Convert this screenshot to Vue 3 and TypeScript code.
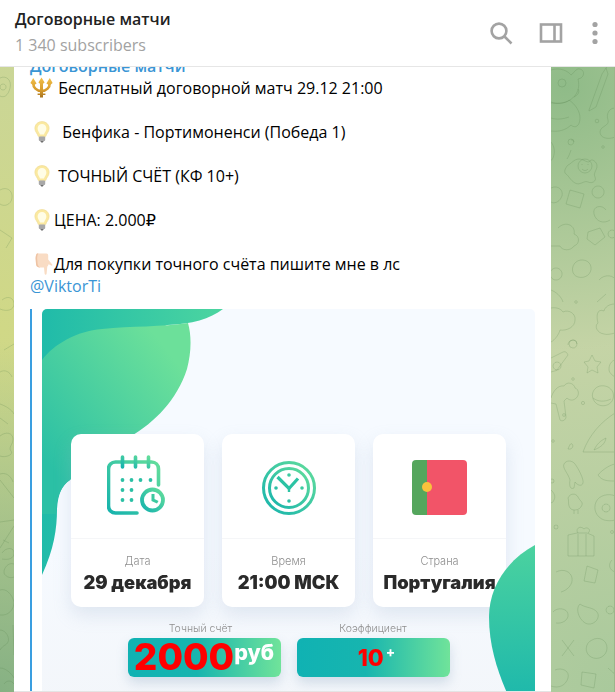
<script setup lang="ts">
const lines = [
  { icon: "trident", text: " Бесплатный договорной матч 29.12 21:00" },
  { icon: "bulb", text: "  Бенфика - Портимоненси (Победа 1)" },
  { icon: "bulb", text: " ТОЧНЫЙ СЧЁТ (КФ 10+)" },
  { icon: "bulb", text: "ЦЕНА: 2.000₽" },
  { icon: "hand", text: "Для покупки точного счёта пишите мне в лс" },
];
const cards = [
  { id: "date", label: "Дата", value: "29 декабря" },
  { id: "time", label: "Время", value: "21:00 МСК" },
  { id: "country", label: "Страна", value: "Португалия" },
];
const dots = [
  [18.5, 26], [27.5, 26], [36.5, 26], [46.5, 26],
  [18.5, 36], [27.5, 36],
  [18.5, 46], [27.5, 46],
];
</script>

<template>
  <div class="window">
    <header class="top">
      <div class="title">
        <div class="name">Договорные матчи</div>
        <div class="subs">1 340 subscribers</div>
      </div>
      <div class="actions">
        <svg width="24" height="24" viewBox="0 0 24 24" fill="none" stroke="#a3a3a3" stroke-width="2.6">
          <circle cx="10" cy="10" r="7.4" />
          <path d="M15.5 15.5 22.5 22.5" />
        </svg>
        <svg width="24" height="24" viewBox="0 0 24 24" fill="none" stroke="#a3a3a3" stroke-width="2.6">
          <rect x="2" y="3.5" width="20" height="17" />
          <path d="M15.5 3.5v17" />
        </svg>
        <svg class="more" width="6" height="24" viewBox="0 0 6 24" fill="#a3a3a3">
          <circle cx="3" cy="3.5" r="2.6" />
          <circle cx="3" cy="12" r="2.6" />
          <circle cx="3" cy="20.5" r="2.6" />
        </svg>
      </div>
    </header>

    <main class="chat">
      <svg class="doodles" width="615" height="625" viewBox="0 67 615 625" fill="none" stroke="#54804a" stroke-opacity=".21" stroke-width="1">
        <!-- left strip -->
        <path d="M0 78c6-3 12 2 10 10s-6 10-10 8M3 84a3 3 0 1 0 .1 0" />
        <path d="M0 190c7-4 13 1 12 8s-8 9-12 6M0 230l12 8M12 238l-6 10" />
        <path d="M2 300c6-5 12-2 12 4s-7 8-14 5M4 350l10-6M0 372c5-3 10 0 12 5" />
        <path d="M0 404c6 2 12 6 14 10M0 418l8 6" />
        <path d="M0 436c6-5 13-3 13 3s-5 8-2 12-6 7-11 5M0 474c6-2 11 2 13 8M0 480l14 18" />
        <path d="M0 522l14-2M0 548l14-22M3 540l6 3M2 553c4-6 12-6 12 0s-6 7-12 6" />
        <path d="M14 564c-6-2-10 4-10 8s6 7 10 5M0 590c6-2 12 4 14 12 0 8-6 14-14 13" />
        <path d="M0 630c6 0 10 8 8 12s-4 2-8 8M13 625l1 30M0 668c6 0 12 6 14 10M4 684c3-4 7-4 10 0" />
        <!-- right strip: bear, brush, egg -->
        <path d="M551 70c9-3 17 1 20 5 3-2 5-7 9-6s5 6 1 9l-3 1c2 8 0 16-8 21-6 4-14 4-19 2" />
        <circle cx="562" cy="83" r="4" />
        <path d="M578 89c2 3 0 6-4 8M551 103c8 1 15 0 18-3 6 4 11 11 11 18 0 8-5 11-9 7-5 5-12 7-20 6M551 118c6 2 12 1 18-1" />
        <path d="M589 110l13-36 4-6 2 6-12 33-7 4zM606 68c2-3 5-5 8-5" />
        <path d="M615 108c-6 0-9 6-7 12s-8 6-8 12 8 8 15 5" />
        <circle cx="597" cy="121" r="1.8" />
        <path d="M574 142a3 3 0 1 0-3 3c4-1 3-6 0-5" />
        <circle cx="603" cy="147" r="1.3" />
        <path d="M571 150c-1 3-2 6-4 9M551 142c4 5 4 11 2 16-2 3-1 2-2 2" />
        <path d="M568 165c3-1 6-6 11-6s9 5 11 2 7 1 7 5-4 7-2 11-3 7-7 5-8 4-13 1-6-7-9-9 0-7 2-9z" />
        <circle cx="585" cy="166" r="7" />
        <path d="M582 164v1M588 164v1M582 169c2 2 4 2 6 0" />
        <!-- right strip: middle -->
        <path d="M551 188c8-4 14 4 10 10-2 4-7 6-10 4M570 190l14 4-4 14-14-4zM598 186a6 6 0 1 0 .1 0M606 210c-4-6-14-4-12 4s10 10 16 6" />
        <path d="M558 228c8-8 18-2 16 6 6 2 6 10 0 12-3 5-12 5-14 0l-9 0M588 232l12-4 5 9-10 8-8-6zM612 230a4 4 0 1 0 .1 0" />
        <path d="M556 268a6 6 0 1 0 .1 0M576 262c5-4 14-2 15 5s-6 12-13 10-7-11-2-15zM599 280c6-7 16-4 16 0" />
        <path d="M606 294l-9 8M551 290c5 2 10 6 12 12" />
        <!-- right strip: cloud, fox, spiral -->
        <path d="M551 308c6-1 10 1 12 4 6-3 13 2 12 8 0 7-8 11-15 10-1 4-5 10-9 12" />
        <path d="M615 304c-6 0-10 3-11 7-7-3-8 5-6 12-4 3-1 10 6 11 3 1 7 0 11-1" />
        <path d="M577 344a4 4 0 1 0-4 4c5 0 5-7 1-8-4 0-6 2-6 5" />
        <circle cx="576" cy="302" r="1.3" />
        <path d="M551 358l12-6c3-1 4 1 5 3l-11 15c-1 1-3 1-6 2M557 362a4 4 0 1 0 .1 0" />
        <path d="M589 361l3-6 3 6 6 1-4 5 1 6-6-3-5 3 1-6-4-5z" />
        <path d="M615 360c-4 1-6 5-6 9s3 6 6 8" />
        <circle cx="573" cy="379" r="1.3" />
        <path d="M551 398c2-7 7-13 13-12 3-5 10-3 11 2 4 1 5 8 0 11-3 2-6 1-8-1l-3 3 2 16c0 3-4 5-6 3l-4-16-5-1" />
        <circle cx="564" cy="415" r="1.4" />
        <path d="M605 386c6 1 10 7 8 13s-9 8-14 6-8-8-6-13 7-7 12-6zM593 398c5 4 12 4 18 1" />
        <circle cx="583" cy="403" r="1.6" />
        <path d="M583 452c6-17 18-30 32-39M583 452h32M594 450c3-6 6-9 12-12-1 6-5 9-12 12" />
        <circle cx="553" cy="441" r="1.3" />
        <path d="M568 449c2-5 3-6 4-5 2 2 0 6-4 5zM564 464c2-4 8-4 11 0s9 15 8 19-6 2-8-1l-1 6c-4 2-5-3-4-8-2-7-8-12-6-16z" />
        <path d="M615 464c-6 1-14 7-17 11 4 6 10 6 17 6" />
        <circle cx="552" cy="481" r="2" />
        <path d="M568 498c2-5 8-5 10-1s5 5 4 8-4 5-7 5-5-1-6-4 0-6-1-8zM574 510v4M578 510v4" />
        <path d="M551 490c3 3 5 6 3 10s-2 2-3 3M615 496c-6-3-16-1-19 6s0 15 8 18c4 1 8 1 11 0M606 504a4 4 0 1 0 .1 0" />
        <circle cx="556" cy="527" r="2" />
        <path d="M568 535l9-2h10l7 3v20h-26zM578 533c-3-4 2-8 6-4 3-3 8 1 4 4M578 534v22M586 534v22" />
        <circle cx="612" cy="532" r="1.5" />
        <!-- right strip: bottom -->
        <path d="M556 572c8-4 15 0 16 6s-4 12-11 14M587 566l11 4-3 13-11-2zM612 560c-4 4-3 10 3 12" />
        <path d="M553 612c4-5 14-4 15 2s-6 10-12 9M580 604c5 4 13 3 17 8s-2 13-9 12-14-14-8-20zM610 606a4 4 0 1 0 .1 0" />
        <path d="M562 640l12 16M574 640l-12 16M592 640c7-4 15 0 15 8s-9 13-16 9-6-14 1-17z" />
        <path d="M555 670c7-3 15 1 13 8s-9 11-17 8M582 672l14 2-2 14-13-3zM608 668c3 3 7 5 7 8" />
      </svg>

      <article class="bubble">
        <div class="channel">Договорные матчи</div>
        <p v-for="line in lines" :key="line.text" class="line">
          <svg v-if="line.icon === 'trident'" class="emoji" width="24" height="22" viewBox="0 0 24 22" fill="none">
            <defs>
              <linearGradient id="gold" gradientUnits="userSpaceOnUse" x1="0" y1="0" x2="0" y2="22">
                <stop offset="0" stop-color="#f3c24a" />
                <stop offset=".6" stop-color="#d69a2c" />
                <stop offset="1" stop-color="#9c6a1c" />
              </linearGradient>
            </defs>
            <path stroke="url(#gold)" stroke-width="2.6" d="M3.4 6C3 10.5 6.5 14 11.5 14 16.5 14 20 10.5 19.6 6" />
            <path stroke="url(#gold)" stroke-width="3" d="M11.5 4V20.5" />
            <path fill="url(#gold)" d="M11.5 .5 14.6 5.5 11.5 8 8.4 5.5ZM3.2 1 6.6 6.4 3.4 8.6 .4 6ZM19.8 1 22.6 6 19.6 8.6 16.4 6.4ZM7.6 16.4H15.4V18H7.6Z" />
          </svg>
          <svg v-else-if="line.icon === 'bulb'" class="emoji" width="24" height="22" viewBox="0 0 24 22">
            <path fill="#fbe9a0" stroke="#efdc96" stroke-width=".7" d="M12 .6C7.6 .6 4.9 3.8 4.9 7.4 4.9 10.6 7.4 12.4 8.4 15.6H15.6C16.6 12.4 19.1 10.6 19.1 7.4 19.1 3.8 16.4 .6 12 .6Z" />
            <path fill="#fffde6" d="M12 3C9.4 3 7.6 5 7.6 7.4 7.6 9.6 9.2 11 10 13.4H14C14.8 11 16.4 9.6 16.4 7.4 16.4 5 14.6 3 12 3Z" />
            <rect x="8.8" y="15.6" width="6.4" height="4.4" rx="1" fill="#a8a8a8" />
            <path fill="#6f6f6f" d="M10.2 20H13.8L12.8 21.6H11.2Z" />
          </svg>
          <svg v-else class="emoji" width="24" height="22" viewBox="0 0 24 22">
            <path fill="#f9dcc4" d="M7 .6H16.4C17.6 .6 18.2 1.4 18.2 2.6V6.6L22.2 11.4C22.8 12.2 22 13 21.2 12.6L18.6 11.2C18.2 12.4 17.8 13 17.3 13.6L16.6 20.8C16.4 22.2 14.8 22.2 14.6 20.8L14 14.4H9.4C7 14.4 6 12.6 6 10.8L5.7 6.4C5.4 4.2 5.8 2 7 .6Z" />
            <path fill="#eec3a4" d="M7 .6C5.8 2 5.4 4.2 5.7 6.4L6 10.8C6 12.6 7 14.4 9.4 14.4H10C8 13.4 7.6 11.6 7.5 9.6L7.2 6C7 4 7.4 2 8.4 .6Z" />
          </svg>
          <span>{{ line.text }}</span>
        </p>
        <p class="mention-line"><a class="mention" href="#">@ViktorTi</a></p>

        <div class="attach">
          <div class="poster">
            <svg class="blobs" width="493" height="383" viewBox="0 0 493 383">
              <defs>
                <linearGradient id="dark" x1="0" y1="0" x2="1" y2="0">
                  <stop offset="0" stop-color="#20bba9" />
                  <stop offset="1" stop-color="#4cd5a0" />
                </linearGradient>
                <linearGradient id="light" x1="0" y1="1" x2="1" y2="0">
                  <stop offset=".15" stop-color="#2bc0a5" />
                  <stop offset=".85" stop-color="#6ce09a" />
                </linearGradient>
                <linearGradient id="corner" x1="0" y1="0" x2="0" y2="1">
                  <stop offset="0" stop-color="#4bd29f" />
                  <stop offset="1" stop-color="#1fb9ab" />
                </linearGradient>
              </defs>
              <path fill="url(#dark)" d="M0 0H181C168 10 150 15 125 16L40 60 28 171C20 176 16 185 15 200 15 220 12 240 0 266Z" />
              <path fill="url(#light)" d="M0 51C12 35 35 22 60 20 90 17 120 18 146 14 150 28 149 45 145 60 135 91 113 113 88 128 70 139 50 155 28 171 18 178 14 190 14 205L0 205Z" />
            </svg>
            <div class="cards">
              <section v-for="card in cards" :key="card.id" class="card">
                <div class="card-icon">
                  <svg v-if="card.id === 'date'" width="62" height="66" viewBox="3 0 62 66" fill="none">
                    <defs>
                      <linearGradient id="ico" x1="0" y1="1" x2="1" y2="0">
                        <stop offset="0" stop-color="#16b3ad" />
                        <stop offset="1" stop-color="#62dd9b" />
                      </linearGradient>
                    </defs>
                    <path stroke="url(#ico)" stroke-width="3.6" stroke-linecap="round" d="M33 59H11.5C7.5 59 4.5 56 4.5 52V15C4.5 11 7.5 8 11.5 8H47.5C51.5 8 54.5 11 54.5 15V31" />
                    <path stroke="url(#ico)" stroke-width="3.6" stroke-linecap="round" d="M18.5 3V13M31.5 3V13M44.5 3V13" />
                    <circle v-for="d in dots" :key="d[0] * 100 + d[1]" :cx="d[0]" :cy="d[1]" r="1.9" fill="#2cc0a5" />
                    <circle cx="48.5" cy="46" r="10.5" fill="#fff" stroke="url(#ico)" stroke-width="3.8" />
                    <path fill="#3cc9a0" d="M47.5 40H50.5V45L54.5 47 53 49.5 47.5 47Z" />
                  </svg>
                  <svg v-else-if="card.id === 'time'" width="56" height="56" viewBox="0 -1 56 56" fill="none">
                    <defs>
                      <linearGradient id="ico2" x1="0" y1="1" x2="1" y2="0">
                        <stop offset="0" stop-color="#16b3ad" />
                        <stop offset="1" stop-color="#62dd9b" />
                      </linearGradient>
                    </defs>
                    <circle cx="28" cy="28" r="25.5" stroke="url(#ico2)" stroke-width="3" />
                    <circle cx="28" cy="28" r="19.5" stroke="url(#ico2)" stroke-width="3" />
                    <path stroke="#2cc3a4" stroke-width="3.2" fill="none" d="M16.5 17 28 28.5 37 18.5" />
                    <path stroke="#2cc3a4" stroke-width="2.4" d="M28 26V32" />
                    <circle cx="28" cy="15" r="1.8" fill="#3ccaa1" />
                    <circle cx="41" cy="28" r="1.8" fill="#3ccaa1" />
                    <circle cx="28" cy="41" r="1.8" fill="#2cc0a5" />
                    <circle cx="15" cy="28" r="1.8" fill="#2cc0a5" />
                  </svg>
                  <div v-else class="flag"><span class="flag-dot" /></div>
                </div>
                <div class="card-body">
                  <div class="card-label">{{ card.label }}</div>
                  <div class="card-value">{{ card.value }}</div>
                </div>
              </section>
            </div>
            <div class="offers">
              <div class="offer">
                <div class="offer-label first">Точный счёт</div>
                <div class="offer-box">
                  <span class="price">2000</span><span class="rub">руб</span>
                </div>
              </div>
              <div class="offer">
                <div class="offer-label">Коэффициент</div>
                <div class="offer-box">
                  <span class="ratio">10</span><span class="plus">+</span>
                </div>
              </div>
            </div>
            <svg class="blob-right" width="46" height="148" viewBox="0 0 46 148">
              <path fill="url(#corner)" d="M46 0C20 14 0 40 0 72 0 100 8 125 18 148H46Z" />
            </svg>
          </div>
        </div>
      </article>
    </main>
  </div>
</template>

<style>
html,
body {
  margin: 0;
  background: #fff;
}
</style>

<style scoped>
.window {
  width: 615px;
  height: 692px;
  display: flex;
  flex-direction: column;
  overflow: hidden;
  font-family: "Open Sans", "DejaVu Sans", sans-serif;
}

.top {
  flex: none;
  height: 66px;
  box-sizing: content-box;
  border-bottom: 1px solid #e6e6e6;
  background: #fff;
  display: flex;
  justify-content: space-between;
  align-items: center;
  padding: 0 17px 0 15px;
  position: relative;
  z-index: 2;
}

.title {
  margin-top: -3px;
}

.name {
  font-size: 16px;
  font-weight: 600;
  line-height: 22px;
  color: #222;
}

.subs {
  margin-top: 4px;
  font-size: 16px;
  line-height: 22px;
  color: #a2a2a2;
}

.actions {
  display: flex;
  align-items: center;
  gap: 26px;
  margin-top: -1px;
}

.more {
  margin-left: 3px;
}

.chat {
  flex: 1;
  min-height: 0;
  position: relative;
  overflow: hidden;
  padding-left: 14px;
  border-right: 1px solid #9ab58a;
  background:
    radial-gradient(circle at 92% 3%, #8fbb88 0, rgba(143, 187, 136, 0) 32%),
    radial-gradient(circle at 0 100%, #86b183 0, rgba(134, 177, 131, 0) 40%),
    radial-gradient(circle at 0 42%, #d0d886 0, rgba(208, 216, 134, 0) 70%),
    radial-gradient(circle at 100% 100%, #a9c99c 0, rgba(169, 201, 156, 0) 40%),
    #c5d4a6;
}

.doodles {
  position: absolute;
  left: 0;
  top: 0;
}

.bubble {
  position: relative;
  box-sizing: border-box;
  width: 537px;
  height: 637px;
  margin-top: -12px;
  padding: 0 16px;
  background: #fff;
  border-bottom: 1px solid #e4e4e4;
  overflow: hidden;
  color: #000;
  font-size: 16px;
  line-height: 22px;
}

.channel {
  height: 22px;
  font-weight: 600;
  color: #3a95d5;
}

.line {
  margin: 0 0 22px;
  height: 22px;
  white-space: pre;
}

.line:nth-of-type(5) {
  margin-bottom: 0;
}

.mention-line {
  margin: 0;
  height: 22px;
}

.emoji {
  display: inline-block;
  vertical-align: top;
}

.mention {
  color: #3a95d5;
  text-decoration: none;
}

.attach {
  margin-top: 12px;
  padding-left: 10px;
  border-left: 2px solid #3a9ee0;
  height: 400px;
}

.poster {
  position: relative;
  width: 493px;
  height: 400px;
  box-sizing: border-box;
  padding: 125px 0 0 29px;
  border-radius: 5px 5px 0 0;
  overflow: hidden;
  background: linear-gradient(#f6faff 60%, #f3f6fa);
}

.blobs {
  position: absolute;
  left: 0;
  top: 0;
}

.blob-right {
  position: absolute;
  right: 0;
  top: 236px;
}

.cards {
  position: relative;
  display: flex;
  gap: 18px;
  width: 435px;
}

.card {
  flex: 1;
  height: 173px;
  border-radius: 10px;
  background: #fff;
  box-shadow: 0 8px 18px rgba(150, 170, 200, 0.24);
  display: flex;
  flex-direction: column;
}

.card-icon {
  height: 105px;
  flex: none;
  display: flex;
  align-items: center;
  justify-content: center;
  padding-top: 2px;
  border-bottom: 1px solid #f5f6f8;
  box-sizing: border-box;
  filter: blur(0.5px);
}

.flag {
  position: relative;
  width: 55px;
  height: 55px;
  border-radius: 4px;
  background: linear-gradient(90deg, #55a65d 15px, #f25468 15px);
}

.flag-dot {
  position: absolute;
  left: 10px;
  top: 22px;
  width: 10px;
  height: 10px;
  border-radius: 50%;
  background: #f9c23c;
}

.card-body {
  text-align: center;
  padding-top: 15px;
  filter: blur(0.3px);
}

.card-label {
  font-family: Inter, "DejaVu Sans", sans-serif;
  font-size: 11px;
  font-weight: 300;
  line-height: 14px;
  color: #8f8f8f;
}

.card-value {
  margin-top: 2px;
  font-family: Inter, "DejaVu Sans", sans-serif;
  font-size: 18.3px;
  font-weight: 900;
  line-height: 24px;
  color: #2a2a2a;
}

.offers {
  position: relative;
  display: flex;
  gap: 16px;
  justify-content: center;
  width: 435px;
  margin-top: 16px;
}

.offer {
  width: 153px;
  text-align: center;
}

.offer-label {
  font-family: Inter, "DejaVu Sans", sans-serif;
  font-size: 10.5px;
  font-weight: 300;
  line-height: 12px;
  color: #8f8f8f;
  filter: blur(0.3px);
}

.offer-label.first {
  padding-right: 7px;
}

.offer-box {
  margin-top: 3px;
  height: 39px;
  border-radius: 6px;
  background: linear-gradient(90deg, #10b2b3 0, #17b5af 45%, #70e39a 100%);
  box-shadow: 0 6px 12px rgba(130, 160, 190, 0.3);
  display: flex;
  align-items: center;
  justify-content: center;
  font-family: Inter, "DejaVu Sans", sans-serif;
  font-weight: 800;
  filter: blur(0.3px);
}

.price {
  margin-top: -2px;
  font-size: 37px;
  line-height: 39px;
  color: #f00;
}

.rub {
  margin-top: -12px;
  font-size: 21.5px;
  line-height: 24px;
  color: #fff;
}

.ratio {
  margin-left: 7px;
  font-size: 23px;
  line-height: 24px;
  color: #f00;
}

.plus {
  margin-top: -12px;
  margin-left: 2px;
  font-size: 14px;
  font-weight: 700;
  line-height: 14px;
  color: #fff;
}
</style>
